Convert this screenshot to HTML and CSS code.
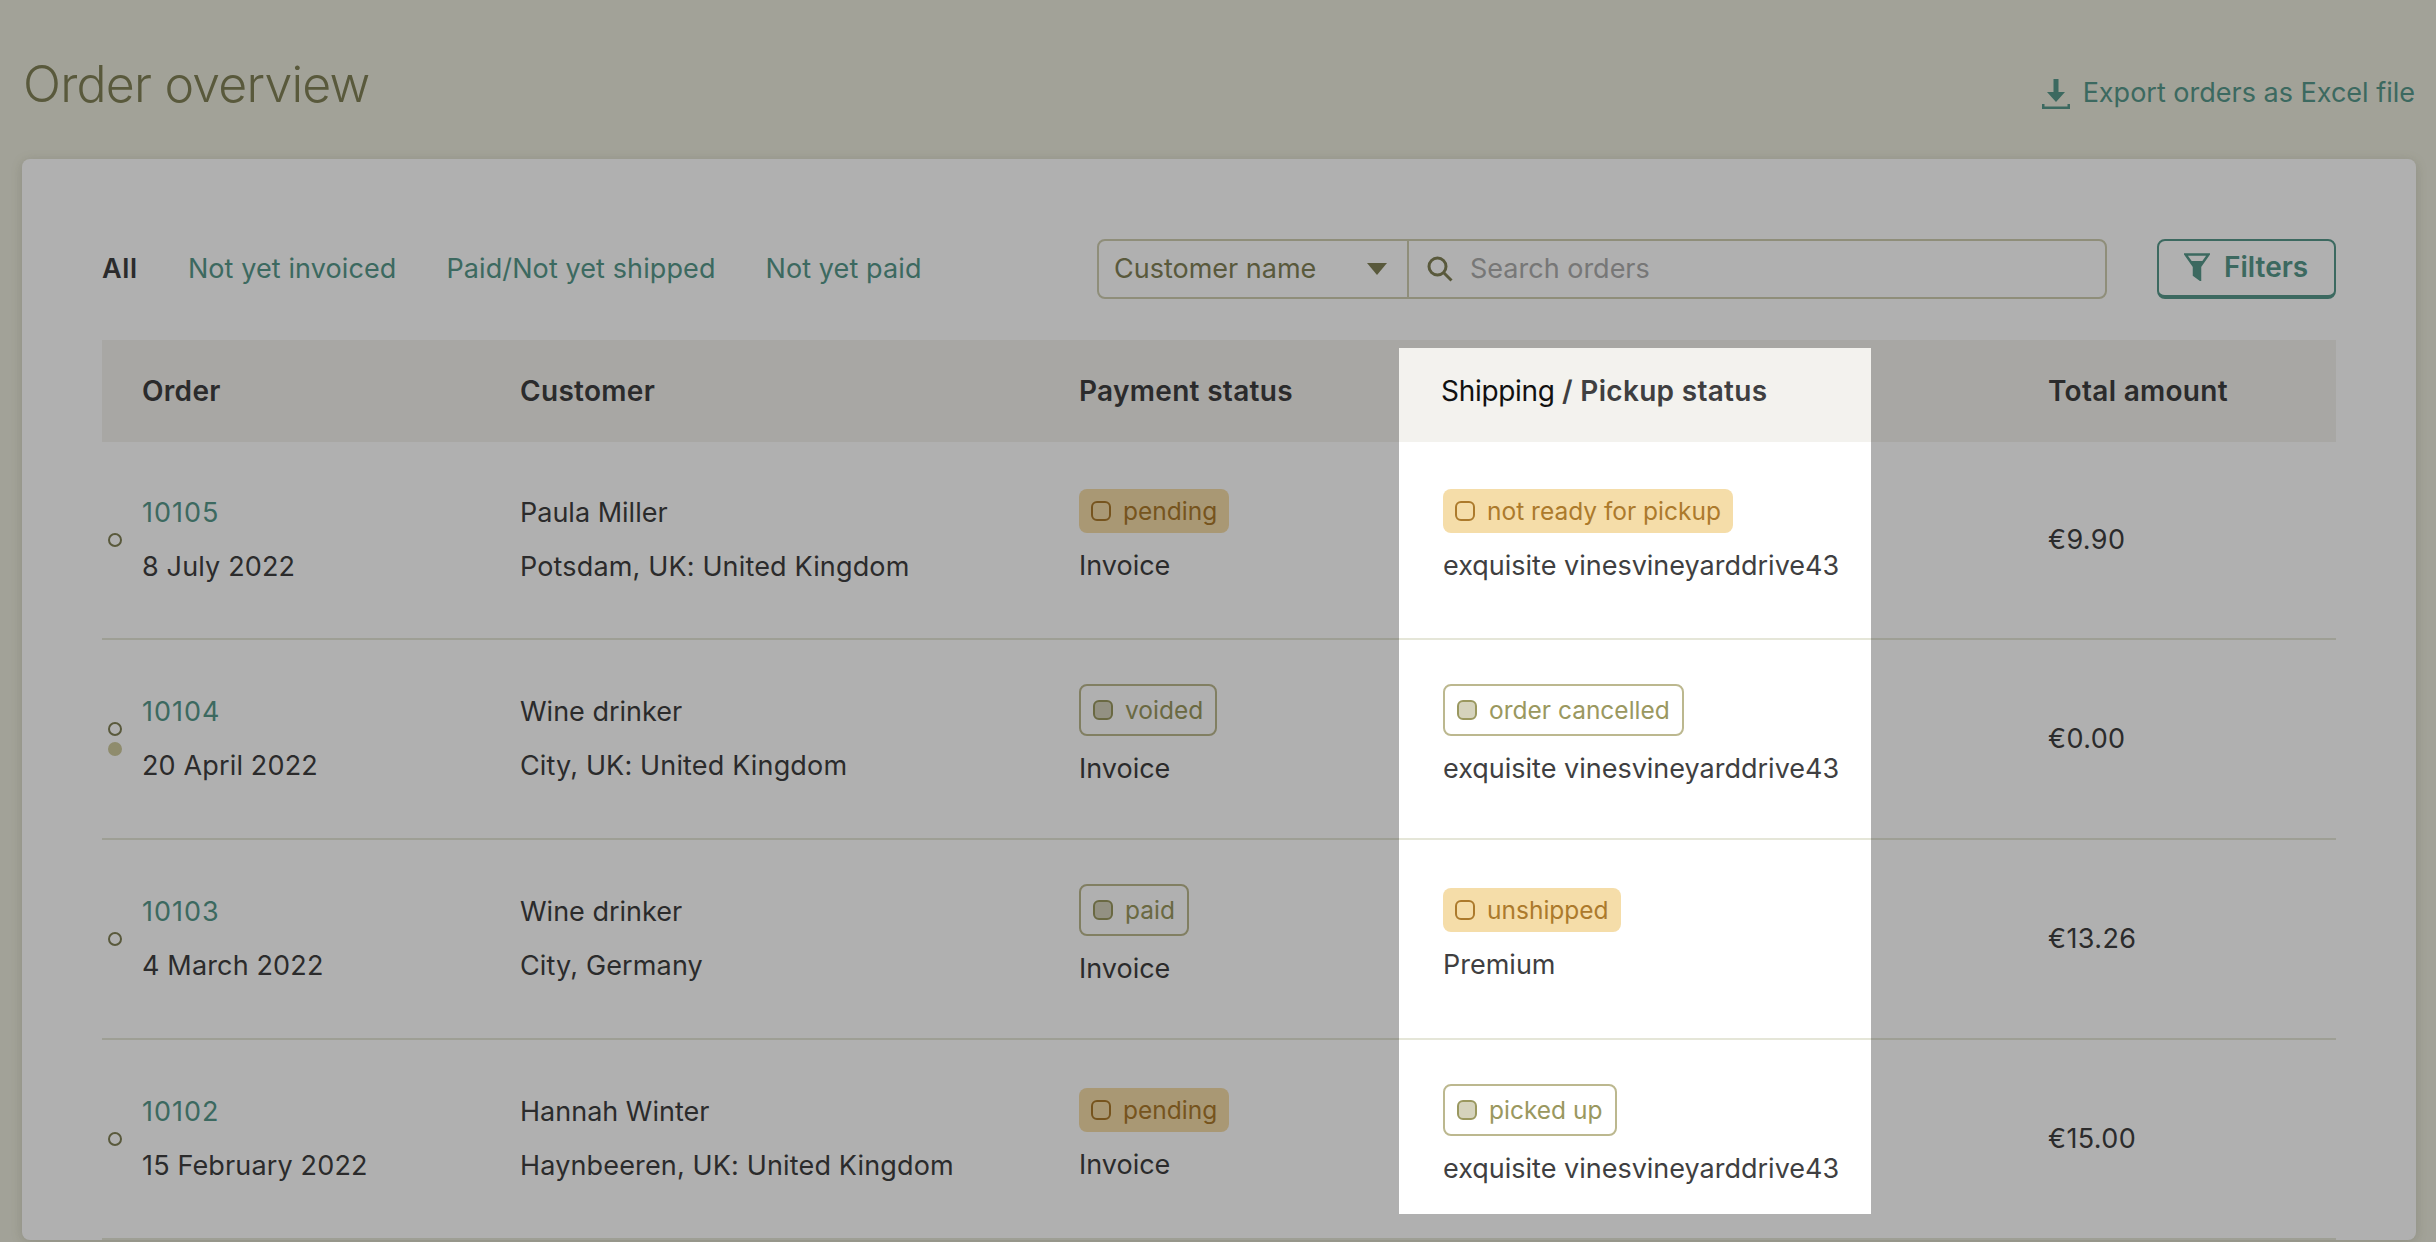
FILE: index.html
```html
<!DOCTYPE html>
<html>
	<head>
		<meta charset="utf-8">
		<title>Order overview</title>
		<link rel="stylesheet" href="styles.css">
	</head>
	<body>

	<header class="page-head">
		<h1>Order overview</h1>
		<a class="export" href="#">
			<svg width="28" height="30" viewBox="0 0 28 30"><path class="fill" d="M11.500 0h5v13h6.500L14 23 5 13h6.500z"/><path class="fill" d="M0 25h2.500v2.500h23V25H28v5H0z"/></svg>
			Export orders as Excel file
		</a>
	</header>

	<main class="card">
		<div class="toolbar">
			<nav class="tabs">
				<a class="active" href="#">All</a>
				<a href="#">Not yet invoiced</a>
				<a href="#">Paid/Not yet shipped</a>
				<a href="#">Not yet paid</a>
			</nav>
			<div class="search">
				<div class="search-type">
					Customer name
					<svg width="20" height="12" viewBox="0 0 20 12"><path d="M0 0h20L10 12z"/></svg>
				</div>
				<div class="search-field">
					<svg width="26" height="26" viewBox="0 0 26 26"><circle cx="10.500" cy="10.500" r="8.500"/><path d="M16.500 16.500l8 8"/></svg>
					<span>Search orders</span>
				</div>
			</div>
			<button class="filters">
				<svg width="26" height="28" viewBox="0 0 26 28"><path class="outline" d="M1.500 1.500h23L16 13.500v13l-6-4.500v-8.500z"/><path class="fill" d="M6 8h14l-4 5.500v13l-6-4.500v-8.500z"/></svg>
				Filters
			</button>
		</div>

		<table class="orders">
			<colgroup>
				<col class="c-order"><col class="c-customer"><col class="c-payment"><col class="c-shipping"><col class="c-total">
			</colgroup>
			<thead>
				<tr>
					<th>Order</th>
					<th>Customer</th>
					<th>Payment status</th>
					<th><span class="th-first">Shipping</span> / Pickup status</th>
					<th>Total amount</th>
				</tr>
			</thead>
			<tbody>
				<tr>
					<td>
						<div class="order-cell">
							<div class="dots"><i class="dot"></i></div>
							<div><a href="#">10105</a><p>8 July 2022</p></div>
						</div>
					</td>
					<td class="customer"><div>Paula Miller</div><p>Potsdam, UK: United Kingdom</p></td>
					<td class="status"><span class="badge amber"><i></i>pending</span><p class="sub">Invoice</p></td>
					<td class="status"><span class="badge amber"><i></i>not ready for pickup</span><p class="sub">exquisite vinesvineyarddrive43</p></td>
					<td class="total">€9.90</td>
				</tr>
				<tr>
					<td>
						<div class="order-cell">
							<div class="dots"><i class="dot"></i><i class="dot full"></i></div>
							<div><a href="#">10104</a><p>20 April 2022</p></div>
						</div>
					</td>
					<td class="customer"><div>Wine drinker</div><p>City, UK: United Kingdom</p></td>
					<td class="status"><span class="badge grey"><i></i>voided</span><p class="sub">Invoice</p></td>
					<td class="status"><span class="badge grey"><i></i>order cancelled</span><p class="sub">exquisite vinesvineyarddrive43</p></td>
					<td class="total">€0.00</td>
				</tr>
				<tr>
					<td>
						<div class="order-cell">
							<div class="dots"><i class="dot"></i></div>
							<div><a href="#">10103</a><p>4 March 2022</p></div>
						</div>
					</td>
					<td class="customer"><div>Wine drinker</div><p>City, Germany</p></td>
					<td class="status"><span class="badge grey"><i></i>paid</span><p class="sub">Invoice</p></td>
					<td class="status"><span class="badge amber"><i></i>unshipped</span><p class="sub">Premium</p></td>
					<td class="total">€13.26</td>
				</tr>
				<tr>
					<td>
						<div class="order-cell">
							<div class="dots"><i class="dot"></i></div>
							<div><a href="#">10102</a><p>15 February 2022</p></div>
						</div>
					</td>
					<td class="customer"><div>Hannah Winter</div><p>Haynbeeren, UK: United Kingdom</p></td>
					<td class="status"><span class="badge amber"><i></i>pending</span><p class="sub">Invoice</p></td>
					<td class="status"><span class="badge grey"><i></i>picked up</span><p class="sub">exquisite vinesvineyarddrive43</p></td>
					<td class="total">€15.00</td>
				</tr>
			</tbody>
		</table>
	</main>

	<div class="spotlight"></div>

	</body>
</html>
```

FILE: styles.css
```css
html, body {
	height: 100%;
	overflow: hidden;
}

body {
	margin: 0;
	font-family: Inter, "Liberation Sans", sans-serif;
	font-size: 27px;
	line-height: 36px;
	background-color: #ebebdc;
	color: #3f3f41;
}

a {
	color: #57998b;
	text-decoration: none;
}

p {
	margin: 18px 0 0;
}

/* page head */
.page-head {
	display: flex;
	justify-content: space-between;
	align-items: baseline;
	height: 159px;
	box-sizing: border-box;
	padding: 55px 21px 0 23px;
}

h1 {
	margin: 0;
	font-size: 50px;
	line-height: 58px;
	font-weight: 350;
	letter-spacing: -0.8px;
	color: #828257;
}

.export svg {
	margin-right: 5px;
	vertical-align: -7px;
}

.fill {
	fill: #57998b;
}

/* card */
.card {
	margin: 0 20px 0 22px;
	padding: 80px 80px 0;
	background-color: white;
	border-radius: 8px;
	box-shadow: 0 2px 12px rgba(90, 90, 60, 0.2);
}

.toolbar {
	display: flex;
	align-items: center;
	height: 60px;
	margin-bottom: 41px;
}

.tabs {
	display: flex;
	gap: 50px;
	margin-right: auto;
	letter-spacing: 0.1px;
}

.tabs .active {
	color: #3f3f41;
	font-weight: 600;
	letter-spacing: 0.7px;
}

.search {
	display: flex;
	width: 1010px;
	height: 60px;
	box-sizing: border-box;
	border: 2px solid #cfceb1;
	border-radius: 8px;
}

.search-type {
	display: flex;
	align-items: center;
	justify-content: space-between;
	width: 310px;
	box-sizing: border-box;
	padding: 0 20px 0 15px;
	border-right: 2px solid #cfceb1;
	color: #828257;
}

.search-type svg path {
	fill: #828257;
}

.search-field {
	display: flex;
	align-items: center;
	gap: 17px;
	padding-left: 18px;
	color: #adadad;
}

.search-field svg {
	fill: none;
	stroke: #828257;
	stroke-width: 3;
}

.filters {
	display: flex;
	align-items: center;
	gap: 14px;
	width: 179px;
	height: 60px;
	box-sizing: border-box;
	margin-left: 50px;
	padding: 0 0 2px 25px;
	background: none;
	border: 2px solid #57998b;
	border-bottom-width: 4px;
	border-radius: 8px;
	color: #57998b;
	font-family: inherit;
	font-size: 28px;
	font-weight: 600;
}

.filters .outline {
	fill: none;
	stroke: #57998b;
	stroke-width: 2.5;
}

/* table */
.orders {
	width: 2234px;
	table-layout: fixed;
	border-collapse: collapse;
}

.c-order { width: 378px; }
.c-customer { width: 559px; }
.c-payment { width: 362px; }
.c-shipping { width: 607px; }
.c-total { width: 328px; }

.orders th {
	height: 102px;
	padding: 0 0 0 40px;
	background-color: #f3f2ee;
	text-align: left;
	font-size: 28px;
	font-weight: 600;
	letter-spacing: 0.3px;
}

.th-first {
	color: #111;
	font-weight: 400;
	letter-spacing: -0.3px;
}

.orders td {
	box-sizing: border-box;
	height: 200px;
	padding: 0 0 0 40px;
	border-bottom: 2px solid #e5e6d8;
}

.orders tbody tr:first-child td {
	height: 197px;
}

.orders td:first-child {
	padding-left: 6px;
}

.orders td.status {
	padding-bottom: 8px;
}

.orders td:nth-child(4) {
	padding-left: 42px;
}

.order-cell {
	display: flex;
	align-items: center;
	gap: 20px;
}

.order-cell a {
	letter-spacing: 1px;
}

.order-cell p {
	letter-spacing: 0.15px;
}

.customer p {
	letter-spacing: 0.15px;
}

.total {
	letter-spacing: 0.4px;
}

.dots {
	display: flex;
	flex-direction: column;
	gap: 6px;
}

.dot {
	display: block;
	width: 14px;
	height: 14px;
	box-sizing: border-box;
	border: 2px solid #828257;
	border-radius: 50%;
}

.dot.full {
	background-color: #cfcb9f;
	border-color: #cfcb9f;
}

.sub {
	margin-top: 15px;
}

/* badges */
.badge {
	display: inline-flex;
	align-items: center;
	gap: 12px;
	height: 44px;
	padding: 0 12px;
	border-radius: 8px;
	font-size: 24.5px;
	line-height: 30px;
	vertical-align: top;
}

.badge i {
	display: block;
	width: 20px;
	height: 20px;
	box-sizing: border-box;
	border: 2px solid;
	border-radius: 6px;
}

.badge.amber {
	background-color: #f5dda9;
	color: #ac7a2c;
}

.badge.grey {
	height: 48px;
	border: 2px solid #bcb88f;
	color: #9a9860;
}

.badge.grey i {
	background-color: #d5d3bd;
}

/* the dimmed tour overlay with its cut-out over the shipping column */
.spotlight {
	position: absolute;
	left: 1399px;
	top: 348px;
	width: 472px;
	height: 866px;
	box-shadow: 0 0 0 3000px rgba(0, 0, 0, 0.31);
}
```
